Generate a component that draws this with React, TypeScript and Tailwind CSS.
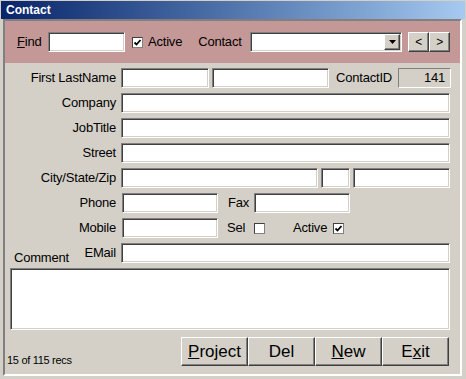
import React from "react";

const sunken =
  "bg-white border border-t-[#808080] border-l-[#808080] border-r-white border-b-white shadow-[inset_1px_1px_0_#404040,inset_-1px_-1px_0_#d4d0c8]";
const raised =
  "bg-[#d4d0c8] border border-t-white border-l-white border-r-[#404040] border-b-[#404040] shadow-[inset_-1px_-1px_0_#808080]";

function Field({ w, className = "" }: { w: string; className?: string }) {
  return <div className={`h-[20px] ${w} ${sunken} ${className}`} />;
}

function Check({ checked }: { checked?: boolean }) {
  return (
    <div className="w-[11px] h-[11px] bg-white border border-t-[#404040] border-l-[#404040] border-r-[#808080] border-b-[#808080] flex items-center justify-center">
      {checked && (
        <svg width="9" height="9" viewBox="0 0 9 9">
          <path d="M1.5 4.5 L3.5 6.5 L7.5 2" stroke="#000" strokeWidth="1.8" fill="none" />
        </svg>
      )}
    </div>
  );
}

function Label({ children }: { children: React.ReactNode }) {
  return <div className="w-[112px] text-right pr-[1px] shrink-0">{children}</div>;
}

export default function App() {
  return (
    <div
      className="w-[466px] h-[379px] bg-[#d4d0c8] flex flex-col text-black text-[13px] tracking-[-0.2px]"
      style={{ fontFamily: '"Liberation Sans", Arial, sans-serif' }}
    >
      <div className="mt-[1px] mx-[1px] h-[18px] bg-gradient-to-r from-[#0a246a] to-[#a6caf0] flex items-center pl-[5px]">
        <span className="text-white font-bold text-[12px] tracking-normal">Contact</span>
      </div>

      <div className="flex-1 ml-[3px] mr-[4px] mb-[3px] border-2 border-t-[#808080] border-l-[#808080] border-r-white border-b-white flex flex-col">
        {/* find band */}
        <div className="h-[42px] bg-[#c59898] flex items-center pl-[12px] shrink-0">
          <span className="w-[31px]">
            <span className="underline">F</span>ind
          </span>
          <Field w="w-[77px]" />
          <div className="ml-[7px]">
            <Check checked />
          </div>
          <span className="ml-[5px]">Active</span>
          <span className="ml-[16px] w-[52px]">Contact</span>
          <div className={`h-[20px] w-[152px] ${sunken} flex items-center justify-end pr-[1px]`}>
            <div className={`w-[16px] h-[16px] ${raised} flex items-center justify-center`}>
              <svg width="7" height="4" viewBox="0 0 7 4">
                <path d="M0 0 H7 L3.5 4 Z" fill="#000" />
              </svg>
            </div>
          </div>
          <div className="ml-[6px] flex">
            <div className={`w-[21px] h-[20px] ${raised} flex items-center justify-center text-[12px]`}>&lt;</div>
            <div className={`w-[21px] h-[20px] ${raised} flex items-center justify-center text-[12px]`}>&gt;</div>
          </div>
        </div>

        {/* fields */}
        <div className="flex flex-col gap-[5px] pt-[5px]">
          <div className="flex items-center h-[20px]">
            <Label>First LastName</Label>
            <Field w="w-[88px]" className="ml-[4px]" />
            <Field w="w-[117px]" className="ml-[3px]" />
            <span className="ml-[7px] w-[62px]">ContactID</span>
            <div className="h-[20px] w-[53px] border border-t-[#808080] border-l-[#808080] border-r-white border-b-white text-right pr-[5px] leading-[18px]">
              141
            </div>
          </div>
          <div className="flex items-center h-[20px]">
            <Label>Company</Label>
            <Field w="w-[329px]" className="ml-[4px]" />
          </div>
          <div className="flex items-center h-[20px]">
            <Label>JobTitle</Label>
            <Field w="w-[329px]" className="ml-[4px]" />
          </div>
          <div className="flex items-center h-[20px]">
            <Label>Street</Label>
            <Field w="w-[329px]" className="ml-[4px]" />
          </div>
          <div className="flex items-center h-[20px]">
            <Label>City/State/Zip</Label>
            <Field w="w-[197px]" className="ml-[4px]" />
            <Field w="w-[29px]" className="ml-[3px]" />
            <Field w="w-[97px]" className="ml-[3px]" />
          </div>
          <div className="flex items-center h-[20px]">
            <Label>Phone</Label>
            <Field w="w-[96px]" className="ml-[5px]" />
            <span className="w-[36px] pl-[10px]">Fax</span>
            <Field w="w-[96px]" />
          </div>
          <div className="flex items-center h-[20px]">
            <Label>Mobile</Label>
            <Field w="w-[96px]" className="ml-[5px]" />
            <span className="w-[36px] pl-[9px]">Sel</span>
            <Check />
            <span className="ml-[28px]">Active</span>
            <div className="ml-[6px]">
              <Check checked />
            </div>
          </div>
          <div className="flex items-center h-[20px]">
            <div className="w-[112px] shrink-0 flex justify-between pr-[1px]">
              <span className="pl-[9px] translate-y-[5px]">Comment</span>
              <span>EMail</span>
            </div>
            <Field w="w-[329px]" className="ml-[4px]" />
          </div>
          <div className={`ml-[5px] w-[440px] h-[62px] ${sunken}`} />
        </div>

        {/* bottom */}
        <div className="flex items-end mt-[7px]">
          <span className="pl-[2px] text-[11px] tracking-[-0.3px] mb-[-2px]">15 of 115 recs</span>
          <div className="ml-auto mr-[11px] flex text-[17px] tracking-normal">
            <div className={`w-[67px] h-[29px] ${raised} flex items-center justify-center`}>
              <span>
                <span className="underline">P</span>roject
              </span>
            </div>
            <div className={`w-[67px] h-[29px] ${raised} flex items-center justify-center`}>Del</div>
            <div className={`w-[67px] h-[29px] ${raised} flex items-center justify-center`}>
              <span>
                <span className="underline">N</span>ew
              </span>
            </div>
            <div className={`w-[67px] h-[29px] ${raised} flex items-center justify-center`}>
              <span>
                E<span className="underline">x</span>it
              </span>
            </div>
          </div>
        </div>
      </div>
    </div>
  );
}
